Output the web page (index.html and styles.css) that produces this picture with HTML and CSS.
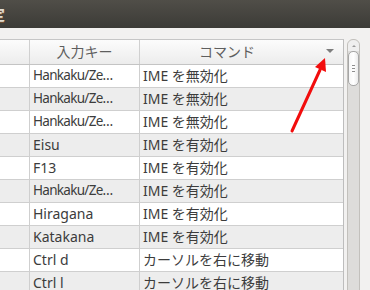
FILE: index.html
```html
<!DOCTYPE html>
<html>
<head>
<meta charset="utf-8">
<link rel="stylesheet" href="styles.css">
</head>
<body>
<div class="window">
  <div class="titlebar"><span class="title">設定</span></div>
  <div class="content">
    <div class="table">
      <div class="row header">
        <div class="cell c0"></div>
        <div class="cell c1">入力キー</div>
        <div class="cell c2"><span class="label">コマンド</span><span class="sort"></span></div>
      </div>
      <div class="row"><div class="cell c0"></div><div class="cell c1 tight">Hankaku/Ze…</div><div class="cell c2">IME を無効化</div></div>
      <div class="row alt"><div class="cell c0"></div><div class="cell c1 tight">Hankaku/Ze…</div><div class="cell c2">IME を無効化</div></div>
      <div class="row"><div class="cell c0"></div><div class="cell c1 tight">Hankaku/Ze…</div><div class="cell c2">IME を無効化</div></div>
      <div class="row alt"><div class="cell c0"></div><div class="cell c1">Eisu</div><div class="cell c2">IME を有効化</div></div>
      <div class="row"><div class="cell c0"></div><div class="cell c1">F13</div><div class="cell c2">IME を有効化</div></div>
      <div class="row alt"><div class="cell c0"></div><div class="cell c1 tight">Hankaku/Ze…</div><div class="cell c2">IME を有効化</div></div>
      <div class="row"><div class="cell c0"></div><div class="cell c1">Hiragana</div><div class="cell c2">IME を有効化</div></div>
      <div class="row alt"><div class="cell c0"></div><div class="cell c1">Katakana</div><div class="cell c2">IME を有効化</div></div>
      <div class="row"><div class="cell c0"></div><div class="cell c1">Ctrl d</div><div class="cell c2">カーソルを右に移動</div></div>
      <div class="row alt"><div class="cell c0"></div><div class="cell c1">Ctrl l</div><div class="cell c2">カーソルを右に移動</div></div>
    </div>
    <div class="scrollbar">
      <div class="stepper"><span class="chev"></span></div>
      <div class="thumb"><span class="grip"></span><span class="grip"></span><span class="grip"></span></div>
    </div>
  </div>
  <svg class="annot" width="370" height="290" viewBox="0 0 370 290">
    <line x1="292" y1="131" x2="320" y2="70" stroke="#f20d0d" stroke-width="3" stroke-linecap="round"/>
    <polygon points="325,58 326,72 315,67" fill="#f20d0d"/>
  </svg>
</div>
</body>
</html>
```
FILE: styles.css
```css
html, body {
  margin: 0;
  padding: 0;
  background: #f2f1f0;
  overflow: hidden;
}
.window {
  position: relative;
  width: 370px;
  height: 290px;
  overflow: hidden;
  display: flex;
  flex-direction: column;
  font-family: "Noto Sans", "Noto Sans CJK JP", sans-serif;
  font-size: 14px;
  color: #3c3c3c;
}
.titlebar {
  height: 28px;
  flex: none;
  background: linear-gradient(#504e48, #3c3b37);
  display: flex;
  align-items: center;
  overflow: hidden;
}
.title {
  margin-left: -25px;
  margin-top: -2px;
  font-family: "Noto Sans CJK JP", sans-serif;
  font-weight: bold;
  font-size: 15px;
  color: #dfdbd2;
  text-shadow: 0 1px 0 #7a5330;
}
.content {
  flex: 1;
  display: flex;
  padding-top: 11px;
  align-items: flex-start;
}
.table {
  width: 343px;
  flex: none;
  border-top: 1px solid #c6c6c6;
  border-right: 1px solid #bdbdbd;
  background: #ffffff;
}
.row {
  display: grid;
  grid-template-columns: 30px 110px 1fr;
  height: 23px;
  border-bottom: 1px solid #cfcfcf;
  box-sizing: border-box;
}
.row.alt {
  background: #ededed;
}
.row.header {
  height: 25px;
  background: linear-gradient(#fcfcfc, #ececec);
  border-bottom: 1px solid #c4c4c4;
  color: #5e5e5e;
}
.cell {
  border-right: 1px solid #cfcfcf;
  box-sizing: border-box;
  padding-left: 3px;
  display: flex;
  align-items: center;
  white-space: nowrap;
  overflow: hidden;
  line-height: 1;
}
.tight {
  font-size: 13.5px;
  letter-spacing: -0.7px;
}
.c2 {
  border-right: none;
}
.header .cell {
  border-right-color: #d0d0d0;
}
.header .c1 {
  justify-content: center;
  padding-left: 0;
}
.header .c2 {
  padding-left: 0;
}
.label {
  flex: 1;
  text-align: center;
  padding-right: 1px;
}
.sort {
  width: 0;
  height: 0;
  border-left: 4px solid transparent;
  border-right: 4px solid transparent;
  border-top: 4px solid #7d7d7d;
  margin-right: 9px;
  margin-left: 11px;
  margin-top: -2px;
}
.scrollbar {
  margin-left: 3px;
  width: 13px;
  height: 260px;
  box-sizing: border-box;
  border: 1px solid #c2c0bc;
  border-radius: 6px 6px 0 0;
  background: #dddcda;
  display: flex;
  flex-direction: column;
  align-items: center;
}
.stepper {
  width: 100%;
  height: 11px;
  background: #efefef;
  border-radius: 6px 6px 0 0;
  display: flex;
  justify-content: center;
  align-items: center;
}
.chev {
  width: 0;
  height: 0;
  border-left: 2px solid transparent;
  border-right: 2px solid transparent;
  border-bottom: 2px solid #9a9a9a;
  margin-top: 1px;
}
.thumb {
  width: 11px;
  height: 35px;
  box-sizing: border-box;
  border: 1px solid #a6a6a6;
  border-radius: 5px;
  background: linear-gradient(90deg, #f6f6f6, #ffffff 50%, #ebebeb);
  display: flex;
  flex-direction: column;
  align-items: center;
  justify-content: center;
  gap: 2px;
}
.grip {
  width: 3px;
  height: 1px;
  background: #8e8e8e;
}
.annot {
  position: absolute;
  left: 0;
  top: 0;
  pointer-events: none;
}
```
